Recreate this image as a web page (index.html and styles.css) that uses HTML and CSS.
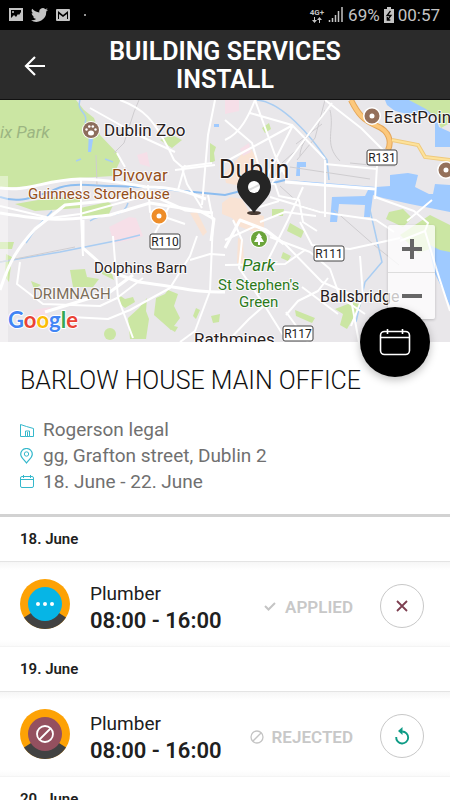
FILE: index.html
```
<!DOCTYPE html>
<html lang="en">

<head>
    <meta charset="UTF-8">
    <meta name="viewport" content="width=device-width, initial-scale=1.0">
    <title>Building Services Install</title>
    <link rel="stylesheet" href="styles.css">
</head>

<body>
    <!-- Phone status bar -->
    <div class="status-bar">
        <div class="status-left">
            <svg width="16" height="16" viewBox="0 0 16 16"><path fill="#c4c4c4" fill-rule="evenodd" d="M1 1h14v13H1zM3 3v8l3-3 2 2 2-3 1 1 2-3V3z"/><circle cx="5" cy="5" r="1" fill="#c4c4c4"/></svg>
            <svg width="17" height="16" viewBox="0 0 24 22"><path fill="#c4c4c4" d="M24 3.5a10 10 0 0 1-2.8.8A5 5 0 0 0 23.300 1.600a10 10 0 0 1-3.100 1.200A4.900 4.900 0 0 0 11.800 7.300 14 14 0 0 1 1.700 2.200a4.900 4.900 0 0 0 1.500 6.500A5 5 0 0 1 1 8.100a4.900 4.900 0 0 0 3.900 4.900 5 5 0 0 1-2.200.1 4.900 4.900 0 0 0 4.600 3.400A10 10 0 0 1 0 18.500 14 14 0 0 0 21.500 6 10 10 0 0 0 24 3.500z"/></svg>
            <svg width="16" height="16" viewBox="0 0 16 16"><path fill="#c4c4c4" fill-rule="evenodd" d="M2 2h12a1 1 0 0 1 1 1v10a1 1 0 0 1-1 1H2a1 1 0 0 1-1-1V3a1 1 0 0 1 1-1zM3 4v8h1V7l4 3 4-3v5h1V4l-5 4z"/></svg>
            <span class="dot"></span>
        </div>
        <div class="status-right">
            <div class="network">
                <span>4G+</span>
                <svg width="10" height="6" viewBox="0 0 10 6"><path fill="#c4c4c4" d="M2 0h1v3h2L2.500 6 0 3h2zM7 6h1V3h2L7.500 0 5 3h2z"/></svg>
            </div>
            <svg width="16" height="16" viewBox="0 0 16 16"><path fill="none" stroke="#c4c4c4" stroke-width="1.500" d="M1.500 13v2M4.500 11v4M7.500 8v7M10.500 4v11M14 0v15"/></svg>
            <span>69%</span>
            <svg width="10" height="16" viewBox="0 0 10 16"><path fill="#c4c4c4" d="M3 0h4v2h3v14H0V2h3z"/><path fill="none" stroke="#000" stroke-width="1.300" d="M6.500 4 3 8.500h4L3.500 13M3.300 10v3h3"/></svg>
            <span>00:57</span>
        </div>
    </div>

    <header class="header">
        <button class="back-button" aria-label="Back">
            <svg width="22" height="22" viewBox="0 0 22 22"><path fill="none" stroke="#fff" stroke-width="2.200" d="M21 11H2.500M11 2l-9 9 9 9"/></svg>
        </button>
        <h1>BUILDING SERVICES INSTALL</h1>
    </header>

    <!-- Map -->
    <div class="map">
        <svg class="map-drawing" viewBox="0 0 450 242" preserveAspectRatio="xMidYMid slice">
            <rect width="450" height="242" fill="#e9e7ea"/>

            <!-- Parks -->
            <g fill="#cbe6a3">
                <path d="M0 0h76l8 10 10 8 6 17 17 18 3 8-7 15-34 2-46 8-33 2z"/>
                <path d="M15 104l40-7 27 2-2 9-45 3z"/>
                <path d="M80 108l28-6 5 3-4 9-26 4z"/>
                <path d="M160 40l12-5 10 5-10 8z"/>
                <path d="M210 43l6 4-2 6 1 8-5 2z"/>
                <path d="M262 28l7-5 2 6-6 4z"/>
                <path d="M70 170l15-1 2 8 12 2-6 8h-20z"/>
                <path d="M119 195l6 4 8-2 2 5-10 6-5-4z"/>
                <path d="M147 198l-8 10-11 10 2 21h16l3-20-3-8z"/>
                <path d="M168 190l10 4-4 12 6 12-9 12-17-15 2-17 9-4z"/>
                <path d="M102 172l8-4 4 12-12-6z"/>
                <circle cx="110" cy="234" r="6"/>
                <path d="M272 109h12l-1 7h-11z"/>
                <path d="M290 123l14 8-3 7-14-7z"/>
                <path d="M283 152l8 4-3 5-7-3z"/>
                <path d="M0 142h14l-2 7H0zM6 154l6 3-3 25-4-5z"/>
                <path d="M196 208l4 2-4 9-3-3zM211 216l9-2-1 8-6 1z"/>
                <path d="M295 210l20 8-3 5-16-7z"/>
                <path d="M335 209l18-7 8 3-14 24-7-4 3-11z"/>
                <path d="M408 0h42v23l-9 5-5-12-12-7z"/>
                <path d="M400 135l30-20 20 10v30l-20-6-12 4z"/>
                <path d="M31 181l10 4-7 4zM170 225l8 2-3 5-5-3z"/>
            </g>

            <!-- Built up areas -->
            <g fill="#f9e3d4">
                <path d="M224 74l25-28 13 20-10 11-6 10-20-4z"/>
                <path d="M222 103l8-6 12 2 8 14 14 3v12l-10 4-16-6-6-8-10-4z"/>
                <path d="M238 138l5 2 1 26-7-3zM190 113l7-1 10 20-4 4z"/>
            </g>
            <g fill="#f6dfe8">
                <path d="M109 127l20-10 7 1 7 18-8 3-21 4z"/>
                <path d="M137 55l10-3 3 15-10-3z"/>
                <path d="M225 0h14v11l-14 3zM240 49l9-6 2 9-8 4z"/>
                <path d="M33 210l18-3-5 10-13 2z"/>
            </g>

            <!-- Water -->
            <g fill="#9fcaff">
                <path d="M288 80l88 7 14-1v-11l18-2 10 2-3 12 14 7h4l2-10 15 1v27l-40-8-27-6-10-3-3 22h-6l1-12-26-1-2 18h-7l2-25 33-1 4-8-30-1-34-5z"/>
                <path d="M385 0h24l17 9 10 9 3 9 11 5v15h-15V18l-12-6-16 2-12-3-8-6z"/>
                <path d="M428 144l12 6 10 2v54l-8-18-7-14z"/>
                <path d="M297 62h9v5h-6v9h-4zM214 24h5v3h-5zM89 30l4 10-2 12h-3z"/>
            </g>
            <path fill="#cbe6a3" d="M389 112l14-3 9 9-9 9-17-8z"/>
            <path fill="none" stroke="#8cbdf0" stroke-width="2" d="M0 97c22 8 38-3 50-5 16-10 32-7 62-6 36 1 45 1 61 4l52 5 60-15"/>
            <g fill="none" stroke="#a9cdf2" stroke-width="1.500">
                <path d="M80 0c-4 12 9 12 5 23M92 25l-1 8M76 61l5-2M105 59l8 3M257 0c25 2 54 36 70 60l2 20"/>
                <path d="M0 162l60-10 60-12 20-5M26 143l10-15 16-17M370 110l8 35 4 17-17 20-9 40"/>
                <path d="M90 121c15-11 32 0 38-18"/>
            </g>

            <!-- Railways -->
            <g fill="none" stroke="#cfcdd0" stroke-width="1">
                <path d="M114 53l10-10 10-31 5-12M330 10c5 20-7 34 10 51M325 10c-5 16-25 29-25 46M322 24l-26 20M334 110l40 35 25 20M280 86l22 20 23 7M96 55l1 30M290 67l80 12M350 63l30 3 15 0"/>
                <path d="M325 0l-10 38-18 22M304 43l-22 20M0 162l75-15"/>
            </g>

            <!-- Streets -->
            <g fill="none" stroke="#fff" stroke-width="2" stroke-linejoin="round">
                <path d="M120 0c22 8 34 17 54 60l8 7 30-4M90 8l50 28 35 16M215 0l-7 35-6 70M185 65l-7 25M175 70l40-5M0 106l50 12 30-4 65-18M117 53l8 14"/>
                <path d="M81 80v36l2 40M148 85l2 27 35 12M170 105l-15 28M208 95l5 26-3 70-15 40-15 11M182 68l5 16 15 24"/>
                <path d="M225 40c16-7 24-25 30-40M255 0l20 55 10 20M225 62l37-20 31-17M225 20l27 23 11 38M293 25l-28 55M250 13l42 12 33 34M332 3l-45 60-15 20M325 64l52 5M325 60v57M377 66l-2 33"/>
                <path d="M244 82l31 2 4 12 20 4 4 22 14 9M303 87l-15 33-20 40M270 97l50 15 56 8 18 12M250 110l29-9M260 122l25-10 31 4"/>
                <path d="M20 162l-3 22 26 20 57 2 17-8 26-20M113 136l5 62 15 40"/>
                <path d="M197 136l-7 20-20 32-40 22-22 9-37-2M190 160l20-6 15 1M225 140l31-14 27 16 39 40 28 12 9 48"/>
                <path d="M233 120l9 20-3 28 24 35 20 32M270 137l40 15 20 17 10 28 25 17M300 122l12 23 38 4 50-11M225 165l60-1 20-14M265 205l-16 14-22 23M328 178l-10 13-20 10-12 14M360 156l3 40-12 30M286 212l22 30M302 187l36 27"/>
                <path d="M325 0l36 28 25 25M375 97l39 14 14 12-3 8-25 10M425 131l12 40 13 40M407 121l25-21"/>
            </g>
            <g fill="none" stroke="#fff" stroke-width="3" stroke-linejoin="round">
                <path d="M0 88c30 4 43-8 80-9 20 0 50 5 66 8 35 0 50 9 60 12"/>
                <path d="M0 190c10-30 17-41 35-61l30-24 50-5 28-9 42 19 28 3M83 120v28l26 23 30 11c40 5 58 11 86 10M45 212l65-20 23-17"/>
                <path d="M225 148l15-28 26 10 18 14M285 82l90 7M0 113c50 8 60 8 110 2l40-12 50 8 14 8-3 22"/>
            </g>

            <path fill="none" stroke="#e5a75a" stroke-width="6" d="M351 0c7 14 12 20 26 26 12 5 15 15 11 24"/>
            <path fill="none" stroke="#fcc87c" stroke-width="4" d="M351 0c7 14 12 20 26 26 12 5 15 15 11 24"/>
            <path fill="none" stroke="#efc97c" stroke-width="4" d="M392 40l26 5 7 12 25 3"/>
            <path fill="none" stroke="#fde29b" stroke-width="2" d="M392 40l26 5 7 12 25 3"/>
            <rect class="map-fade" y="76" width="8" height="166"/>

            <!-- Places -->
            <g>
                <circle cx="91" cy="30" r="9" fill="#fff"/>
                <circle cx="91" cy="30" r="8" fill="#8c6d5b"/>
                <g fill="#fff"><ellipse cx="91" cy="33" rx="3" ry="2.500"/><circle cx="86.500" cy="29.500" r="1.200"/><circle cx="89.300" cy="26.500" r="1.300"/><circle cx="92.800" cy="26.500" r="1.300"/><circle cx="95.500" cy="29.500" r="1.200"/></g>
            </g>
            <g fill="#fff">
                <circle cx="159" cy="116" r="9"/>
                <circle cx="372" cy="16" r="9"/>
                <circle cx="446" cy="70" r="9"/>
            </g>
            <g class="place-dot">
                <circle cx="159" cy="116" r="5" stroke="#ee8d29"/>
                <circle cx="372" cy="16" r="5" stroke="#94705b"/>
                <circle cx="446" cy="70" r="5" stroke="#94705b"/>
            </g>
            <g>
                <circle cx="259" cy="139" r="9" fill="#fff"/>
                <circle cx="259" cy="139" r="8" fill="#6ba43a"/>
                <path fill="#fff" d="M259 133l3 4h-1l3 5h-4v3h-2v-3h-4l3-5h-1z"/>
            </g>

            <!-- Labels -->
            <g class="labels">
                <text x="0" y="38" class="label-park">ix Park</text>
                <text x="104" y="36" class="label-big">Dublin Zoo</text>
                <text x="112" y="81" class="label-big label-brown">Pivovar</text>
                <text x="28" y="99" class="label-brown">Guinness Storehouse</text>
                <text x="219" y="78" class="label-city">Dublin</text>
                <text x="384" y="23" class="label-big">EastPoin</text>
                <text x="94" y="173">Dolphins Barn</text>
                <text x="33" y="199" class="label-area">DRIMNAGH</text>
                <text x="242" y="171" class="label-big label-green label-italic">Park</text>
                <text x="218" y="190" class="label-green">St Stephen's</text>
                <text x="239" y="207" class="label-green">Green</text>
                <text x="320" y="202" class="label-mid">Ballsbridge</text>
                <text x="194" y="245" class="label-big">Rathmines</text>
            </g>
            <g class="road-signs">
                <rect x="367" y="50" width="30" height="15" rx="2"/><text x="382" y="62">R131</text>
                <rect x="150" y="134" width="30" height="15" rx="2"/><text x="165" y="146">R110</text>
                <rect x="314" y="146" width="30" height="15" rx="2"/><text x="329" y="158">R111</text>
                <rect x="283" y="226" width="30" height="15" rx="2"/><text x="298" y="238">R117</text>
            </g>
            <text x="8" y="228" class="google"><tspan fill="#4285f4">G</tspan><tspan fill="#ea4335">o</tspan><tspan fill="#fbbc05">o</tspan><tspan fill="#4285f4">g</tspan><tspan fill="#34a853">l</tspan><tspan fill="#ea4335">e</tspan></text>

            <!-- Office marker -->
            <ellipse cx="254" cy="113" rx="7" ry="2" fill="#4a3c34"/>
            <path fill="#252525" d="M254 113c-5-8-17-16-17-26a17 17 0 0 1 34 0c0 10-12 18-17 26z"/>
            <circle cx="254" cy="87" r="6" fill="#fff"/>
            <path stroke="#ddd" stroke-width="2" d="M249 90l10-5"/>
        </svg>
        <div class="zoom-controls">
            <button aria-label="Zoom in"><svg width="22" height="22" viewBox="0 0 22 22"><path stroke="#666" stroke-width="4" d="M1 11h20M11 1v20"/></svg></button>
            <button aria-label="Zoom out"><svg width="22" height="22" viewBox="0 0 22 22"><path stroke="#666" stroke-width="4" d="M1 11h20"/></svg></button>
        </div>
        <button class="calendar-button" aria-label="Calendar">
            <svg width="32" height="28" viewBox="0 0 32 28"><g fill="none" stroke="#fff" stroke-width="1.600"><rect x="1.500" y="3.500" width="29" height="23" rx="4"/><path d="M1.500 9.500h29M8.500 1v5M23.500 1v5"/></g></svg>
        </button>
    </div>

    <section class="office">
        <h2>BARLOW HOUSE MAIN OFFICE</h2>
        <ul class="office-info">
            <li>
                <svg width="14" height="15" viewBox="0 0 14 15"><path fill="none" stroke="#35b8cc" d="M.5 13.500V1.500l6 2 7 2v8H9.500V8h-4v5.500zM5.500 13.500h4M7.500 9v4"/></svg>
                <span>Rogerson legal</span>
            </li>
            <li>
                <svg width="14" height="16" viewBox="0 0 14 16"><path fill="none" stroke="#35b8cc" stroke-width="1.200" d="M6.500 15C4 11.500.7 9.500.7 6.300a5.800 5.800 0 0 1 11.600 0C12.300 9.500 9 11.500 6.500 15z"/><circle cx="6.500" cy="6" r="2.200" fill="none" stroke="#35b8cc"/></svg>
                <span>gg, Grafton street, Dublin 2</span>
            </li>
            <li>
                <svg width="14" height="14" viewBox="0 0 14 14"><g fill="none" stroke="#35b8cc"><rect x=".5" y="1.500" width="13" height="11" rx="1.500"/><path d="M.5 4.500h13M3.500 0v3M10.500 0v3"/></g></svg>
                <span>18. June - 22. June</span>
            </li>
        </ul>
    </section>

    <!-- Shifts -->
    <main class="shifts">
        <h3>18. June</h3>
        <div class="shift">
            <svg width="50" height="50" viewBox="0 0 50 50">
                <circle cx="25" cy="25" r="25" fill="#fda205"/>
                <path fill="#424242" d="M25 25l21 13.500a25 25 0 0 1-42 0z"/>
                <circle cx="25" cy="25" r="17" fill="#06b5e6"/>
                <g fill="#fff"><circle cx="18" cy="25" r="2"/><circle cx="25" cy="25" r="2"/><circle cx="32" cy="25" r="2"/></g>
            </svg>
            <div class="shift-text">
                <p class="job">Plumber</p>
                <p class="time">08:00 - 16:00</p>
            </div>
            <div class="shift-state">
                <svg width="14" height="14" viewBox="0 0 14 14"><path fill="none" stroke="#c4c4c4" stroke-width="2" d="M2 6l3.500 3.500L12 3"/></svg>
                <span>APPLIED</span>
            </div>
            <button class="round-button" aria-label="Cancel">
                <svg width="16" height="16" viewBox="0 0 16 16"><path fill="none" stroke="#7d3f50" stroke-width="1.800" d="M3 3l10 10M13 3L3 13"/></svg>
            </button>
        </div>

        <h3>19. June</h3>
        <div class="shift">
            <svg width="50" height="50" viewBox="0 0 50 50">
                <circle cx="25" cy="25" r="25" fill="#fda205"/>
                <path fill="#424242" d="M25 25l21 13.500a25 25 0 0 1-42 0z"/>
                <circle cx="25" cy="25" r="17" fill="#94505f"/>
                <g fill="none" stroke="#fff" stroke-width="1.800"><circle cx="25" cy="25" r="8"/><path d="M19.500 30.500l11-11"/></g>
            </svg>
            <div class="shift-text">
                <p class="job">Plumber</p>
                <p class="time">08:00 - 16:00</p>
            </div>
            <div class="shift-state">
                <svg width="14" height="14" viewBox="0 0 14 14"><g fill="none" stroke="#c4c4c4" stroke-width="1.300"><circle cx="7" cy="7" r="6"/><path d="M3 11l8-8"/></g></svg>
                <span>REJECTED</span>
            </div>
            <button class="round-button" aria-label="Apply again">
                <svg width="18" height="18" viewBox="0 0 18 18"><path fill="none" stroke="#0d9b85" stroke-width="1.900" d="M3.200 10A6 6 0 1 0 9.200 4.500"/><path fill="#0d9b85" d="M9.500 0v8L5 4z"/></svg>
            </button>
        </div>

        <h3>20. June</h3>
    </main>
</body>

</html>
```
FILE: styles.css
```
* {
    box-sizing: border-box;
}

body {
    margin: 0;
    height: 100vh;
    overflow: hidden;
    background-color: #fff;
    color: #202020;
    font-family: Roboto, sans-serif;
}

h1,
h2,
h3,
p,
ul {
    margin: 0;
    padding: 0;
}

svg {
    display: block;
    flex-shrink: 0;
}

button {
    display: flex;
    justify-content: center;
    align-items: center;
    padding: 0;
    border: none;
    background: none;
    cursor: pointer;
}
/* Phone status bar */

.status-bar {
    display: flex;
    justify-content: space-between;
    align-items: center;
    height: 30px;
    padding: 0 10px 0 8px;
    background-color: #000;
    color: #c4c4c4;
    font-size: 17px;
}

.status-left {
    display: flex;
    align-items: center;
    gap: 7px;
}

.dot {
    width: 2px;
    height: 2px;
    margin-left: 6px;
    border-radius: 50%;
    background-color: #c4c4c4;
}

.status-right {
    display: flex;
    align-items: center;
    gap: 4px;
}

.network {
    display: flex;
    flex-direction: column;
    align-items: center;
    font-size: 8px;
    font-weight: bold;
    line-height: 9px;
}
/* Header */

.header {
    display: grid;
    grid-template-columns: 70px 1fr 70px;
    align-items: center;
    padding: 8px 0 5px;
    background-color: #2b2b2b;
    border-bottom: 1px solid #111;
}

.back-button {
    height: 44px;
}

h1 {
    color: #fff;
    font-size: 25px;
    font-weight: 600;
    line-height: 28px;
    text-align: center;
    padding: 0 30px;
}
/* Map */

.map {
    position: relative;
}

.map-drawing {
    width: 100%;
    height: 242px;
}

.map-fade {
    fill: #fff;
    opacity: 0.4;
}

.place-dot circle {
    fill: #fff;
    stroke-width: 5px;
}

.labels text {
    fill: #28201c;
    stroke: #fff;
    stroke-width: 2px;
    stroke-opacity: 0.8;
    paint-order: stroke;
    font-size: 15px;
}

.labels .label-mid {
    font-size: 16px;
}

.labels .label-big {
    font-size: 17px;
}

.labels .label-city {
    font-size: 25px;
}

.labels .label-brown {
    fill: #96501a;
}

.labels .label-green {
    fill: #2c7a1c;
}

.labels .label-area {
    fill: #7b6d59;
}

.labels .label-italic {
    font-style: italic;
}

.labels .label-park {
    fill: #9cb582;
    stroke: none;
    font-size: 17px;
    font-style: italic;
}

.road-signs rect {
    fill: #fff;
    stroke: #444;
}

.road-signs text {
    fill: #222;
    font-size: 12px;
    text-anchor: middle;
}

.google {
    font-family: Lato, sans-serif;
    font-size: 22px;
    font-weight: bold;
    stroke: #fff;
    stroke-width: 2px;
    paint-order: stroke;
}

.zoom-controls {
    position: absolute;
    top: 125px;
    right: 15px;
    background-color: rgba(255, 255, 255, 0.75);
    border-radius: 2px;
    box-shadow: 0 1px 3px rgba(0, 0, 0, 0.2);
}

.zoom-controls button {
    width: 47px;
    height: 47px;
}

.zoom-controls button + button {
    border-top: 1px solid #ddd;
}

.calendar-button {
    position: absolute;
    right: 20px;
    bottom: -35px;
    width: 70px;
    height: 70px;
    border-radius: 50%;
    background-color: #000;
    box-shadow: 0 3px 8px rgba(0, 0, 0, 0.25);
}
/* Office details */

.office {
    padding: 25px 20px 19px;
    border-bottom: 3px solid #d2d2d2;
}

h2 {
    color: #101010;
    font-size: 25px;
    font-weight: 300;
    line-height: 28px;
}

.office-info {
    margin-top: 22px;
    list-style: none;
    color: #707070;
    font-size: 19px;
    line-height: 26px;
}

.office-info li {
    display: flex;
    align-items: center;
    gap: 9px;
}
/* Shift list */

h3 {
    padding: 0 20px;
    font-size: 15px;
    font-weight: 600;
    line-height: 44px;
}

.shift {
    display: flex;
    align-items: center;
    height: 86px;
    padding: 0 26px 0 20px;
    border-top: 1px solid #e4e4e4;
    border-bottom: 1px solid #f4f4f4;
    background: linear-gradient(#f6f6f6, #fff 8px, #fff 78px, #fafafa);
}

.shift-text {
    flex: 1;
    margin-left: 20px;
    padding-top: 6px;
}

.job {
    font-size: 19px;
    line-height: 27px;
}

.time {
    font-size: 22px;
    font-weight: 600;
    line-height: 28px;
}

.shift-state {
    display: flex;
    align-items: center;
    gap: 8px;
    margin-right: 27px;
    padding-top: 6px;
    color: #c8c8c8;
    font-size: 17px;
    font-weight: 600;
}

.round-button {
    width: 44px;
    height: 44px;
    margin-top: 4px;
    border: 1px solid #c8c8c8;
    border-radius: 50%;
}
```
